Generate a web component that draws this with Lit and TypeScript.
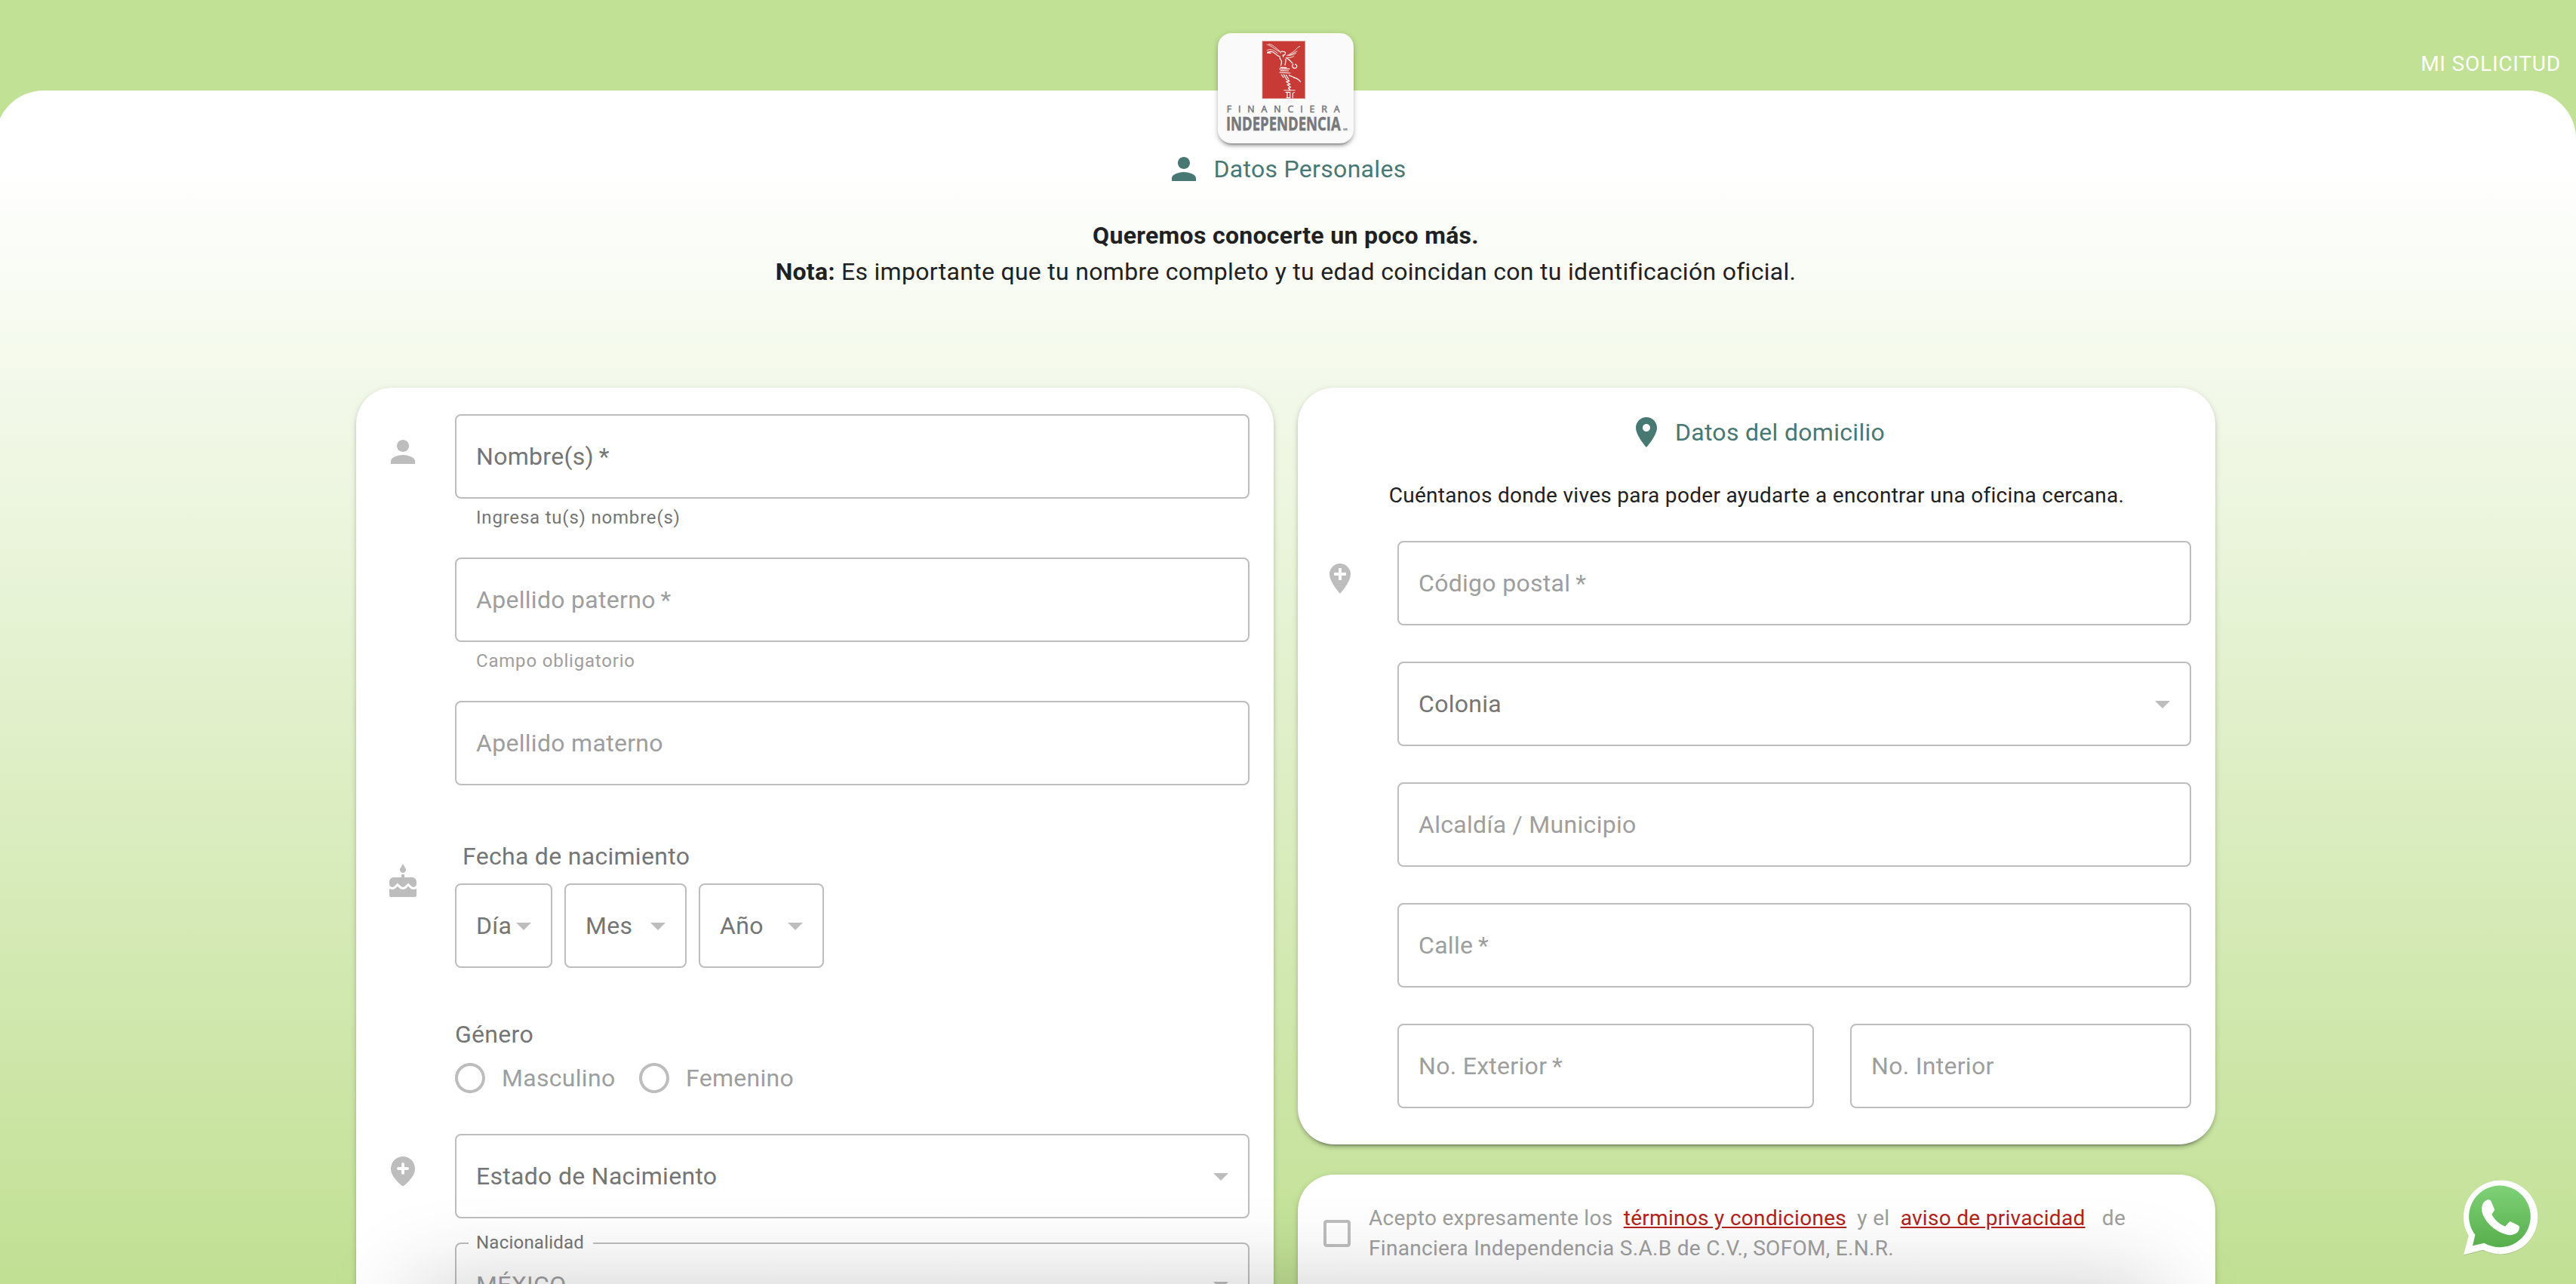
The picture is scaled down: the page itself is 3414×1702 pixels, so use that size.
import { LitElement, html, css, svg, nothing } from "lit";
import { customElement, property } from "lit/decorators.js";

const ICONS: Record<string, ReturnType<typeof svg>> = {
  person: svg`<path d="M12 12c2.21 0 4-1.79 4-4s-1.79-4-4-4-4 1.79-4 4 1.79 4 4 4zm0 2c-2.67 0-8 1.34-8 4v2h16v-2c0-2.66-5.33-4-8-4z"/>`,
  place: svg`<path d="M12 2C8.13 2 5 5.13 5 9c0 5.25 7 13 7 13s7-7.75 7-13c0-3.87-3.13-7-7-7zm0 9.5c-1.38 0-2.5-1.12-2.5-2.5s1.12-2.5 2.5-2.5 2.5 1.12 2.5 2.5-1.12 2.5-2.5 2.5z"/>`,
  addPlace: svg`<path d="M12 2C8.14 2 5 5.14 5 9c0 5.25 7 13 7 13s7-7.75 7-13c0-3.86-3.14-7-7-7zm4 8h-3v3h-2v-3H8V8h3V5h2v3h3v2z"/>`,
  addPlaceRound: svg`<path d="M12 2C7.8 2 4 5.22 4 10.2c0 3.18 2.45 6.92 7.34 11.23.38.33.95.33 1.33 0C17.55 17.12 20 13.38 20 10.2 20 5.22 16.2 2 12 2zm3 9h-2v2c0 .55-.45 1-1 1s-1-.45-1-1v-2H9c-.55 0-1-.45-1-1s.45-1 1-1h2V7c0-.55.45-1 1-1s1 .45 1 1v2h2c.55 0 1 .45 1 1s-.45 1-1 1z"/>`,
  cake: svg`<path d="M12 6c1.11 0 2-.9 2-2 0-.38-.1-.73-.29-1.03L12 0l-1.71 2.97c-.19.3-.29.65-.29 1.03 0 1.1.9 2 2 2zm4.6 9.99l-1.07-1.07-1.08 1.07c-1.3 1.3-3.58 1.31-4.89 0l-1.07-1.07-1.09 1.07C6.75 16.64 5.88 17 4.96 17c-.73 0-1.4-.23-1.96-.61V21c0 .55.45 1 1 1h16c.55 0 1-.45 1-1v-4.61c-.56.38-1.23.61-1.96.61-.92 0-1.79-.36-2.44-1.01zM18 9h-5V7h-2v2H6c-1.66 0-3 1.34-3 3v1.54c0 1.08.88 1.96 1.96 1.96.52 0 1.02-.2 1.38-.57l2.14-2.13 2.13 2.13c.74.74 2.03.74 2.77 0l2.14-2.13 2.13 2.13c.37.37.86.57 1.38.57 1.08 0 1.96-.88 1.96-1.96V12C21 10.34 19.66 9 18 9z"/>`,
  arrow: svg`<path d="M7 10l5 5 5-5z"/>`,
  radio: svg`<path d="M12 2C6.48 2 2 6.48 2 12s4.48 10 10 10 10-4.48 10-10S17.52 2 12 2zm0 18c-4.42 0-8-3.58-8-8s3.58-8 8-8 8 3.58 8 8-3.58 8-8 8z"/>`,
  box: svg`<path d="M19 5v14H5V5h14m0-2H5c-1.1 0-2 .9-2 2v14c0 1.1.9 2 2 2h14c1.1 0 2-.9 2-2V5c0-1.1-.9-2-2-2z"/>`,
};

@customElement("md-icon")
export class MdIcon extends LitElement {
  @property() name = "person";
  static styles = css`
    :host { display: block; width: 48px; height: 48px; flex: none; }
    svg { display: block; width: 48px; height: 48px; fill: currentColor; }
  `;
  render() {
    return html`<svg viewBox="0 0 24 24">${ICONS[this.name]}</svg>`;
  }
}

@customElement("form-field")
export class FormField extends LitElement {
  @property() label = "";
  @property() value = "";
  @property() helper = "";
  @property({ type: Boolean }) required = false;
  @property({ type: Boolean }) select = false;
  @property({ type: Boolean, reflect: true }) strong = false;
  static styles = css`
    :host { display: block; color: #9e9e9e; font-size: 32px; letter-spacing: 0.3px; }
    :host([strong]) { color: #757575; }
    .box {
      position: relative; box-sizing: border-box; height: 112px; border: 2px solid #bdbdbd;
      border-radius: 8px; padding: 0 12px 0 26px; display: flex; align-items: center;
      justify-content: space-between; white-space: nowrap;
    }
    .text { line-height: 48px; }
    .arrow { color: #bdbdbd; margin-left: -20px; }
    .floating {
      position: absolute; left: 16px; top: -20px; padding: 0 12px 0 10px; background: #fff;
      font-size: 24px; line-height: 36px; letter-spacing: 0.225px; color: #757575;
    }
    .helper { margin: 5px 28px 0; height: 41px; line-height: 40px; font-size: 24px; letter-spacing: 0.8px; }
  `;
  render() {
    return html`
      <div class="box">
        ${this.value ? html`<span class="floating">${this.label}</span>` : nothing}
        <span class="text">${this.value || this.label}${this.required ? "\u2009*" : ""}</span>
        ${this.select ? html`<md-icon class="arrow" name="arrow"></md-icon>` : nothing}
      </div>
      ${this.helper ? html`<div class="helper">${this.helper}</div>` : nothing}
    `;
  }
}

@customElement("brand-logo")
export class BrandLogo extends LitElement {
  static styles = css`
    :host {
      display: block; width: 180px; height: 146px; border-radius: 18px; background: #fafafa;
      box-shadow: 0 6px 2px -4px rgba(0,0,0,.2), 0 4px 4px rgba(0,0,0,.18), 0 2px 8px rgba(0,0,0,.16);
    }
    svg { display: block; width: 180px; height: 146px; overflow: visible; }
    .mark { fill: #c83a36; stroke: #dd8f8b; stroke-width: 2; }
    .ink { fill: none; stroke: #fff; stroke-width: 3.6; stroke-linejoin: round; }
    .thin { fill: none; stroke: #fff; stroke-width: 2.6; }
    .name { fill: #77787b; font-family: "Open Sans", sans-serif; }
    .heavy { stroke: #77787b; stroke-width: 1.6; }
  `;
  render() {
    return html`<svg viewBox="42 42 540 438">
      <rect class="mark" x="219" y="74" width="170" height="228"/>
      <path class="thin" d="M236 87c8 2 14 5 22 10l30 20M244 85c12 2 18 7 26 13l20 17M236 110l12-3c10 0 14 3 20 6l13 10"/>
      <path class="ink" d="M237 120l17 1M238 118l14-3c8-1 12 3 16 7s12 11 22 14"/>
      <path class="ink" d="M292 122c-2-8 5-9 10-7 7 0 10 4 8 9-2 6-8 6-11 5M302 131v6"/>
      <path class="thin" d="M369 94c-8 2-14 10-22 18-8 6-16 12-32 20M358 113c-6 3-18 10-32 17M354 120c-8 6-16 9-32 11M346 132c-6 5-16 8-28 7"/>
      <path class="ink" d="M312 139c10 4 18 12 28 24"/>
      <path class="ink" d="M343 165c-8 4-6 14 2 16s13-4 11-10c-2-5-5-6-8-6"/>
      <path class="ink" d="M288 138c0 6 4 9 7 14 2 8-1 14-3 20M311 144c5 8-2 15-2 26"/>
      <path class="ink" d="M290 178l26 1M286 184l42 0M290 191l34 1M287 198l44 3"/>
      <path class="ink" d="M294 206l10 13M303 205l12 18M313 207l11 18M324 209l24 10M312 224l15 8-13 3 16 10-12 2 14 10-10 3 8 8"/>
      <path class="ink" d="M342 218c14 2 22 8 30 19"/>
      <path class="thin" d="M304 269h46M326 258v13"/>
      <path class="ink" d="M318 277v24M329 277v24M340 301v-20c2-3 4-4 8-4M311 277h20M314 299h16"/>
      <text class="name heavy" x="77" y="357" font-size="37" textLength="450" lengthAdjust="spacing">FINANCIERA</text>
      <text class="name heavy" x="75" y="429" font-size="74" font-weight="700" textLength="455" lengthAdjust="spacingAndGlyphs">INDEPENDENCIA</text>
      <text class="name" x="540" y="429" font-size="12" font-weight="700" textLength="18">MR</text>
    </svg>`;
  }
}

@customElement("whatsapp-button")
export class WhatsappButton extends LitElement {
  static styles = css`
    :host { display: block; width: 100px; height: 102px; }
    svg { display: block; width: 100px; height: 102px; overflow: visible; }
  `;
  render() {
    return html`<svg viewBox="105 71 300 306">
      <defs><linearGradient id="g" x1="0" y1="0" x2="0" y2="1">
        <stop offset="0" stop-color="#7fd277"/><stop offset="1" stop-color="#57ae4c"/>
      </linearGradient></defs>
      <path fill="#000" fill-opacity=".14" d="M105 372l20-76a148 148 0 1 1 59 56z"/>
      <path fill="#fff" d="M105 369l20-75a148 147 0 1 1 58 55z"/>
      <path fill="url(#g)" d="M141 333l10-43a122.500 122.500 0 1 1 36 32z"/>
      <path fill="#fff" d="M197 151c6-3 15-1 17 4l14 33c1 4-4 10-11 20 12 22 30 39 54 48 8-9 14-18 18-19 4-1 28 12 36 17 5 3 1 17-5 25-10 10-27 15-46 9-46-13-80-47-94-83-6-22-2-45 17-54z"/>
    </svg>`;
  }
}

@customElement("app-root")
export class AppRoot extends LitElement {
  static styles = css`
    :host { display: block; font-family: Roboto, sans-serif; color: #212121; }
    .page {
      position: relative; width: 3414px; height: 1702px; overflow: hidden; background: #c1e194;
      display: flex; flex-direction: column;
    }
    .bar {
      height: 120px; flex: none; box-sizing: border-box; padding: 60px 20px 0 0; display: flex;
      justify-content: flex-end; align-items: flex-start; color: #fff; font-size: 28px;
      line-height: 49px; letter-spacing: 0.8px;
    }
    .panel {
      flex: 1; width: 3420px; margin-left: -6px; border-radius: 64px 64px 0 0; box-sizing: border-box;
      padding-top: 80px; display: flex; flex-direction: column; align-items: center;
      background: linear-gradient(#fff 0, #fff 100px, #c1e093 1582px);
    }
    .logo { position: absolute; left: 1614px; top: 44px; }
    .title {
      display: flex; justify-content: center; align-items: center; gap: 14px; height: 48px;
      font-size: 32px; line-height: 48px; letter-spacing: 0.3px; color: #487874;
    }
    .lone { gap: 16px; }
    .intro { margin-top: 40px; font-size: 32px; line-height: 48px; letter-spacing: 0.3px; text-align: center; }
    .columns { margin-top: 130px; display: flex; gap: 32px; align-items: flex-start; }
    .side { display: flex; flex-direction: column; gap: 40px; }
    .card {
      box-sizing: border-box; width: 1216px; padding: 35px 32px 48px 0; border-radius: 48px; background: #fff;
      box-shadow: 0 6px 2px -4px rgba(0,0,0,.2), 0 4px 4px rgba(0,0,0,.14), 0 2px 10px rgba(0,0,0,.12);
    }
    .row { display: grid; grid-template-columns: 131px 1fr; }
    .lead { color: #bdbdbd; margin: 26px 0 0 38px; }
    .side .row { grid-template-columns: 132px 1fr; }
    .side .lead { margin-left: 32px; }
    .stack { display: flex; flex-direction: column; gap: 32px; }
    .birth { margin-top: 70px; }
    .birth .lead { margin-top: 34px; }
    .legend { font-size: 32px; line-height: 48px; letter-spacing: 0.3px; color: #757575; }
    .indent { padding-left: 10px; }
    .dates { margin-top: 12px; display: grid; grid-template-columns: 129px 162px 166px; gap: 16px; }
    .gender { margin-top: 64px; }
    .radios { margin: 10px 0 0 -4px; display: grid; grid-template-columns: 244px auto; justify-content: start; }
    .option {
      display: flex; gap: 18px; align-items: center; color: #9e9e9e; font-size: 32px;
      line-height: 48px; letter-spacing: 0.3px;
    }
    .mark { color: #bdbdbd; }
    .origin { margin-top: 50px; }
    .hint { margin: 40px -32px 40px 0; text-align: center; font-size: 28px; line-height: 40px; letter-spacing: 0.3px; }
    .wide { gap: 48px; }
    .side .title { margin-right: -32px; }
    .numbers { display: grid; grid-template-columns: 552px 452px; gap: 48px; }
    .terms {
      height: 300px; padding: 38px 60px 0 28px; display: flex; align-items: flex-start; gap: 18px;
      font-size: 28px; line-height: 40px; letter-spacing: 0.3px; color: #9e9e9e;
    }
    .terms .mark { margin-top: 16px; }
    .link { color: #b3221c; text-decoration: underline; margin: 0 7px; }
    .far { margin-right: 15px; }
    .sheet {
      position: absolute; left: 545px; width: 2320px; top: 1702px; height: 200px;
      box-shadow: 0 0 120px rgba(0,0,0,.2);
    }
    .chat { position: absolute; left: 3265px; top: 1564px; }
  `;
  render() {
    return html`
      <div class="page">
        <div class="bar">MI SOLICITUD</div>
        <div class="panel">
          <div class="title lone"><md-icon name="person"></md-icon><span>Datos Personales</span></div>
          <div class="intro">
            <b>Queremos conocerte un poco más.</b><br />
            <b>Nota:</b> Es importante que tu nombre completo y tu edad coincidan con tu identificación oficial.
          </div>
          <div class="columns">
            <div class="card">
              <div class="row">
                <md-icon class="lead" name="person"></md-icon>
                <div class="stack">
                  <form-field strong required label="Nombre(s)" helper="Ingresa tu(s) nombre(s)"></form-field>
                  <form-field required label="Apellido paterno" helper="Campo obligatorio"></form-field>
                  <form-field label="Apellido materno"></form-field>
                </div>
              </div>
              <div class="row birth">
                <md-icon class="lead" name="cake"></md-icon>
                <div>
                  <div class="legend indent">Fecha de nacimiento</div>
                  <div class="dates">
                    ${["Día", "Mes", "Año"].map((l) => html`<form-field strong select label=${l}></form-field>`)}
                  </div>
                  <div class="legend gender">Género</div>
                  <div class="radios">
                    ${["Masculino", "Femenino"].map(
                      (l) => html`<div class="option"><md-icon class="mark" name="radio"></md-icon><span>${l}</span></div>`
                    )}
                  </div>
                </div>
              </div>
              <div class="row origin">
                <md-icon class="lead" name="addPlaceRound"></md-icon>
                <div class="stack">
                  <form-field strong select label="Estado de Nacimiento"></form-field>
                  <form-field select label="Nacionalidad" value="MÉXICO"></form-field>
                </div>
              </div>
            </div>
            <div class="side">
              <div class="card">
                <div class="title"><md-icon name="place"></md-icon><span>Datos del domicilio</span></div>
                <div class="hint">Cuéntanos donde vives para poder ayudarte a encontrar una oficina cercana.</div>
                <div class="row">
                  <md-icon class="lead" name="addPlace"></md-icon>
                  <div class="stack wide">
                    <form-field required label="Código postal"></form-field>
                    <form-field strong select label="Colonia"></form-field>
                    <form-field label="Alcaldía / Municipio"></form-field>
                    <form-field required label="Calle"></form-field>
                    <div class="numbers">
                      <form-field required label="No. Exterior"></form-field>
                      <form-field label="No. Interior"></form-field>
                    </div>
                  </div>
                </div>
              </div>
              <div class="card terms">
                <md-icon class="mark" name="box"></md-icon>
                <div>
                  Acepto expresamente los <span class="link">términos y condiciones</span> y el
                  <span class="link far">aviso de privacidad</span> de<br />Financiera Independencia S.A.B de C.V., SOFOM, E.N.R.
                </div>
              </div>
            </div>
          </div>
        </div>
        <brand-logo class="logo"></brand-logo>
        <div class="sheet"></div>
        <whatsapp-button class="chat"></whatsapp-button>
      </div>
    `;
  }
}
